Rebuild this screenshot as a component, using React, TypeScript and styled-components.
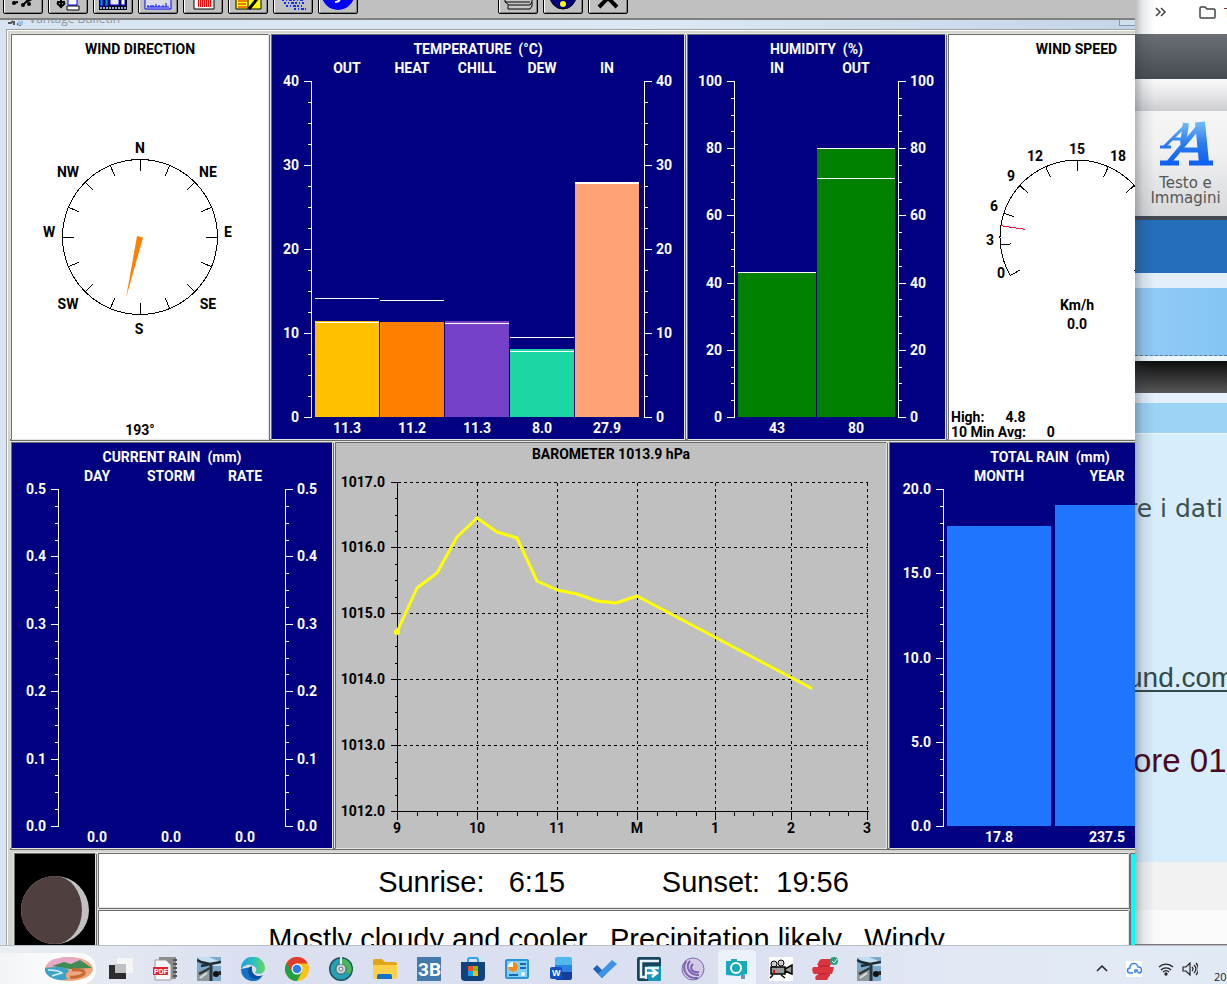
import React from "react";
import styled, { createGlobalStyle } from "styled-components";

const GlobalStyle = createGlobalStyle`
  * { box-sizing: border-box; }
  body { margin: 0; overflow: hidden; background: #d7e4f2; }
`;

const NAVY = "#000080";
const SILVER = "#c0c0c0";
const PANEL_FONT = `Roboto, "Liberation Sans", sans-serif`;

/* ---------- page ---------- */

const Desktop = styled.div`
  display: flex;
  flex-direction: column;
  height: 100vh;
  font-family: ${PANEL_FONT};
`;

const Workspace = styled.main`
  display: flex;
  flex: 1;
  min-height: 0;
  overflow: hidden;
`;

/* ---------- weather window ---------- */

const WeatherWindow = styled.section`
  flex: 1;
  min-width: 0;
  overflow: hidden;
  background: #d7e4f2;
`;

const Toolbar = styled.div`
  display: flex;
  align-items: flex-end;
  gap: 5px;
  height: 20px;
  padding: 0 3px 4px;
  background: ${SILVER};
  border-bottom: 2px solid #808080;
`;

const ToolButton = styled.button<{ $apart?: boolean }>`
  display: flex;
  flex: none;
  align-items: flex-end;
  justify-content: center;
  width: 40px;
  height: 32px;
  padding: 0 0 2px;
  margin-left: ${(p) => (p.$apart ? "135px" : "0")};
  background: ${SILVER};
  border: 1px solid #000;
  border-radius: 2px;
  box-shadow: inset 1px 0 #fff, inset -1px -1px #808080;
`;

const TitleBar = styled.header`
  display: flex;
  gap: 6px;
  height: 9px;
  padding-left: 8px;
  overflow: hidden;
  background: linear-gradient(90deg, #d7e4f2, #dbe7f3 60%, #c3d5e8);
`;

const WindowTitle = styled.h1`
  flex: 1;
  margin: -8px 0 0;
  font: 12px/14px "Open Sans", sans-serif;
  color: #9097a0;
`;

const MinimizeButton = styled.button`
  width: 16px;
  height: 6px;
  padding: 0;
  background: #cfdfee;
  border: 1px solid #8a98a8;
  border-width: 0 0 1px 1px;
`;

const Frame = styled.div`
  margin-left: 6px;
  padding: 3px 0 0 2px;
  background: #d4d4ce;
  border: solid #a0a0a0;
  border-width: 1px 0 0 1px;
  box-shadow: inset 1px 1px #fff;
`;

const PanelRow = styled.div<{ $height: number }>`
  display: flex;
  height: ${(p) => p.$height}px;
  margin-left: 1px;
`;

const Cell = styled.section<{ $basis: number; $bg: string; $fg: string; $fill?: boolean }>`
  flex: ${(p) => (p.$fill ? 1 : 0)} 0 ${(p) => p.$basis}px;
  overflow: hidden;
  margin: 1px;
  background: ${(p) => p.$bg};
  color: ${(p) => p.$fg};
  border: 1px solid;
  border-color: #6d6d6d #e4e4e0 #e4e4e0 #6d6d6d;
  box-shadow: -1px -1px #e4e4e0, 1px 1px #6d6d6d, 1px -1px #e4e4e0, -1px 1px #6d6d6d;
`;

const CellTitle = styled.h2<{ $top?: number }>`
  margin: 0;
  padding-top: ${(p) => p.$top ?? 4}px;
  font: 700 14px/20px ${PANEL_FONT};
  text-align: center;
  white-space: pre;
`;

const Drawing = styled.svg<{ $left?: boolean }>`
  display: block;
  margin: ${(p) => (p.$left ? "0" : "0 auto")};
  overflow: visible;
  fill: currentColor;
  font: 700 14px ${PANEL_FONT};
`;

const Readings = styled.dl`
  margin: 0;
  padding-left: 2px;
  font: 700 14px/15px ${PANEL_FONT};
`;

const Reading = styled.div`
  display: flex;
  gap: 21px;
  dd { margin: 0; }
`;

const BottomRow = styled.div`
  display: flex;
  margin: 2px 0 0 4px;
`;

const TextColumn = styled.div`
  display: flex;
  flex: 1;
  flex-direction: column;
  min-width: 0;
`;

const Banner = styled.p`
  height: 55px;
  margin: 1px;
  background: #fff;
  color: #000;
  border: 1px solid;
  border-color: #6d6d6d #e4e4e0 #e4e4e0 #6d6d6d;
  box-shadow: -1px -1px #e4e4e0, 1px 1px #6d6d6d;
  font: 29px/56px "Liberation Sans", Arial, sans-serif;
  text-align: center;
  white-space: pre;
  overflow: hidden;
`;

const CyanStrip = styled.div`
  width: 5px;
  margin-top: 1px;
  background: #00ffff;
  border: solid #6d6d6d;
  border-width: 1px 0 0 1px;
`;

/* ---------- charts ---------- */

type Bar = { label: string; value: string; x: number; width: number; top?: number; color?: string; marks?: number[] };
type BarChartProps = {
  width: number;
  left: number;
  right?: number;
  bottom: number;
  ticks: string[];
  minor: number;
  bars: Bar[];
};

const AXIS_TOP = 22;

function BarChart({ width, left, right, bottom, ticks, minor, bars }: BarChartProps) {
  const steps = (ticks.length - 1) * minor;
  const span = bottom - AXIS_TOP;
  const all = Array.from({ length: steps + 1 }, (_, i) => ({
    y: Math.round(AXIS_TOP + (span * i) / steps),
    major: i % minor === 0,
    text: ticks[i / minor],
  }));
  return (
    <Drawing width={width} height={bottom + 20} $left>
      {bars.map((b) => (
        <g key={b.label}>
          {b.top !== undefined && <rect x={b.x} y={b.top} width={b.width} height={bottom - b.top} fill={b.color} />}
          {b.marks?.map((m) => <rect key={m} x={b.x} y={m} width={b.width} height={1} />)}
          <text x={b.x + b.width / 2} y={14} textAnchor="middle">{b.label}</text>
          <text x={b.x + b.width / 2} y={bottom + 16} textAnchor="middle">{b.value}</text>
        </g>
      ))}
      <rect x={left} y={AXIS_TOP} width={1} height={span + 1} />
      {right && <rect x={right} y={AXIS_TOP} width={1} height={span + 1} />}
      {all.map((t) => {
        const len = t.major ? 7 : 3;
        return (
          <g key={t.y}>
            <rect x={left - len} y={t.y} width={len} height={1} />
            {right && <rect x={right + 1} y={t.y} width={len} height={1} />}
            {t.major && <text x={left - 12} y={t.y + 5} textAnchor="end">{t.text}</text>}
            {t.major && right && <text x={right + 12} y={t.y + 5}>{t.text}</text>}
          </g>
        );
      })}
    </Drawing>
  );
}

const polar = (cx: number, cy: number, r: number, deg: number) => {
  const a = (deg * Math.PI) / 180;
  return [cx + r * Math.sin(a), cy - r * Math.cos(a)];
};

function Spokes({ cx, cy, angles }: { cx: number; cy: number; angles: number[] }) {
  return (
    <>
      {angles.map((a) => {
        const [x1, y1] = polar(cx, cy, 77, a);
        const [x2, y2] = polar(cx, cy, 66, a);
        return <line key={a} x1={x1} y1={y1} x2={x2} y2={y2} />;
      })}
    </>
  );
}

const compassPoints: [string, number, number][] = [
  ["N", 128, 94], ["NE", 196, 118], ["E", 216, 178], ["SE", 196, 250],
  ["S", 127, 275], ["SW", 56, 250], ["W", 37, 178], ["NW", 56, 118],
];

function Compass() {
  return (
    <Drawing width={256} height={380}>
      <g stroke="#000" fill="none" shapeRendering="crispEdges">
        <circle cx={128} cy={178} r={77.5} />
        <Spokes cx={128} cy={178} angles={Array.from({ length: 16 }, (_, i) => i * 22.5)} />
      </g>
      <path d="M125 177l6 1.500L114 239z" fill="#ff8000" />
      {compassPoints.map(([t, x, y]) => (
        <text key={t} x={x} y={y} textAnchor="middle">{t}</text>
      ))}
      <text x={128} y={376} textAnchor="middle">193°</text>
    </Drawing>
  );
}

const speedLabels: [string, number, number][] = [
  ["0", 52, 219], ["3", 41, 186], ["6", 45, 152], ["9", 62, 122], ["12", 86, 102],
  ["15", 128, 95], ["18", 169, 102], ["21", 196, 122],
];

function SpeedDial() {
  const [x1, y1] = polar(128, 178, 77, -120);
  const [x2, y2] = polar(128, 178, 77, 120);
  const [rx1, ry1] = polar(128, 178, 77, -81.6);
  const [rx2, ry2] = polar(128, 178, 53, -81.6);
  return (
    <Drawing width={256} height={351} $left>
      <g stroke="#000" fill="none" shapeRendering="crispEdges">
        <path d={`M${x1} ${y1}A77 77 0 1 1 ${x2} ${y2}`} />
        <Spokes cx={128} cy={178} angles={[-120, -96, -72, -48, -24, 0, 24, 48, 72, 96, 120]} />
        <line x1={rx1} y1={ry1} x2={rx2} y2={ry2} stroke="#ff1040" />
      </g>
      {speedLabels.map(([t, x, y]) => (
        <text key={t} x={x} y={y} textAnchor="middle">{t}</text>
      ))}
      <text x={128} y={251} textAnchor="middle">Km/h</text>
      <text x={128} y={270} textAnchor="middle">0.0</text>
    </Drawing>
  );
}

const hourMarks: [string, number][] = [["9", 61], ["10", 141], ["11", 221], ["M", 301], ["1", 379], ["2", 455], ["3", 531]];
const pressureMarks: [string, number][] = [["1017.0", 18], ["1016.0", 83], ["1015.0", 149], ["1014.0", 215], ["1013.0", 281], ["1012.0", 347]];
const pressureLine = "61,168 81,124 101,109 121,73 141,54 161,68 181,74 201,117 221,126 241,130 261,137 280,139 301,132 475,224";

function Barometer() {
  return (
    <Drawing width={550} height={380}>
      <g stroke="#000" shapeRendering="crispEdges" transform="translate(.5 .5)" fill="none">
        {pressureMarks.slice(0, 5).map(([t, y]) => <line key={t} x1={61} x2={531} y1={y} y2={y} strokeDasharray="3 3" />)}
        {hourMarks.slice(1).map(([t, x]) => <line key={t} x1={x} x2={x} y1={18} y2={347} strokeDasharray="3 3" />)}
        <path d="M61 18V347H532" />
        {pressureMarks.map(([t, y], i) => (
          <g key={t}>
            <line x1={54} x2={61} y1={y} y2={y} />
            {i < 5 && [1, 2, 3].map((k) => {
              const my = Math.round(y + ((pressureMarks[i + 1][1] - y) * k) / 4);
              return <line key={k} x1={58} x2={61} y1={my} y2={my} />;
            })}
          </g>
        ))}
        {hourMarks.map(([t, x], i) => (
          <g key={t}>
            <line x1={x} x2={x} y1={347} y2={355} />
            {i < 6 && [1, 2, 3].map((k) => {
              const mx = Math.round(x + ((hourMarks[i + 1][1] - x) * k) / 4);
              return <line key={k} x1={mx} x2={mx} y1={347} y2={351} />;
            })}
          </g>
        ))}
      </g>
      <polyline points={pressureLine} fill="none" stroke="#ffff00" strokeWidth={3} strokeLinejoin="round" strokeLinecap="round" />
      <circle cx={61} cy={168} r={3} fill="#ffff00" />
      {pressureMarks.map(([t, y]) => <text key={t} x={49} y={y + 5} textAnchor="end">{t}</text>)}
      {hourMarks.map(([t, x]) => <text key={t} x={x} y={369} textAnchor="middle">{t}</text>)}
    </Drawing>
  );
}

function Moon() {
  return (
    <Drawing width={80} height={112}>
      <circle cx={40} cy={56} r={34} fill="#c0c0c0" />
      <path d="M40 22A34 34 0 0 0 40 90A27 34 0 0 0 40 22z" fill="#503f3f" />
    </Drawing>
  );
}

/* ---------- browser window at the side ---------- */

const BrowserWindow = styled.aside`
  position: relative;
  display: flex;
  flex-direction: column;
  flex: 0 0 92px;
  overflow: hidden;
  background: #fafafa;
  border-bottom: 1px solid #777;
  &::after {
    content: "";
    position: absolute;
    inset: 0 auto 0 0;
    width: 20px;
    background: linear-gradient(90deg, rgba(40, 50, 60, 0.32), rgba(40, 50, 60, 0.1) 40%, transparent);
    pointer-events: none;
  }
`;

const Bookmarks = styled.nav`
  display: flex;
  flex: none;
  align-items: center;
  height: 34px;
  padding: 0 0 8px 19px;
  background: #fff;
  font: 14px/20px "Open Sans", sans-serif;
  color: #8a1c2c;
  white-space: nowrap;
`;

const MoreButton = styled.button`
  width: 14px;
  height: 20px;
  padding: 0;
  border: 0;
  background: none;
`;

const Divider = styled.span`
  width: 2px;
  height: 16px;
  margin: 0 16px 0 15px;
  background: #c4dcf8;
`;

const FolderLink = styled.a`
  display: flex;
  align-items: center;
  gap: 8px;
  color: inherit;
  text-decoration: none;
`;

const Band = styled.div<{ $height: number; $bg: string }>`
  flex: none;
  height: ${(p) => p.$height}px;
  background: ${(p) => p.$bg};
`;

const DashedBand = styled(Band)`
  border-bottom: 1px dashed #5a7890;
`;

const EditorButton = styled.button`
  display: flex;
  flex: none;
  flex-direction: column;
  align-items: center;
  gap: 9px;
  height: 105px;
  padding: 9px 0 0;
  margin: 0 -9px 0 0;
  border: 0;
  background: linear-gradient(#f6f6f6, #f0f0f1 40%, #d6d8da);
  font: 15px/15px "DejaVu Sans", sans-serif;
  color: #555;
  white-space: pre;
`;

const Article = styled.div`
  flex: none;
  height: 428px;
  padding-top: 55px;
  background: #d7edfb;
  white-space: nowrap;
`;

const ArticleLine = styled.p<{ $size: number; $color: string; $gap: number; $indent: number; $font: string }>`
  margin: 0 0 ${(p) => p.$gap}px ${(p) => p.$indent}px;
  font: ${(p) => p.$size}px/40px ${(p) => p.$font};
  color: ${(p) => p.$color};
  a { color: inherit; text-underline-offset: 3px; text-decoration-thickness: 2px; }
`;

const SANS = `"Liberation Sans", Arial, sans-serif`;

/* ---------- taskbar ---------- */

const Taskbar = styled.footer`
  display: flex;
  flex: none;
  align-items: center;
  height: 39px;
  padding-top: 8px;
  overflow: hidden;
  border-top: 1px solid #b9bcc4;
  background: linear-gradient(90deg, #eaeef2, #dae0f0 20%, #dbe0f0 60%, #e2e9f5 80%, #e0eaf5);
`;

const SearchPill = styled.button`
  display: flex;
  flex: none;
  align-items: center;
  justify-content: flex-end;
  width: 96px;
  height: 32px;
  padding: 0 2px 0 0;
  border: 0;
  border-radius: 0 16px 16px 0;
  background: linear-gradient(90deg, #f2f5f7, #fff);
`;

const Apps = styled.div`
  display: flex;
  flex: 1;
  gap: 6px;
  padding-left: 6px;
`;

const AppButton = styled.button<{ $active?: boolean }>`
  display: flex;
  flex: none;
  align-items: center;
  justify-content: center;
  width: 38px;
  height: 38px;
  padding: 0;
  border: 0;
  border-radius: 4px;
  background: ${(p) => (p.$active ? "#edf1f9" : "none")};
`;

const Tray = styled.div`
  display: flex;
  flex: none;
  align-items: center;
  gap: 16px;
`;

const StatusGroup = styled.div`
  display: flex;
  gap: 8px;
`;

const TrayButton = styled.button`
  display: flex;
  width: 16px;
  height: 24px;
  padding: 0;
  align-items: center;
  justify-content: center;
  border: 0;
  background: none;
`;

const Clock = styled.time`
  width: 13px;
  padding-top: 16px;
  font: 11px/14px "Open Sans", sans-serif;
  color: #222;
`;

/* ---------- icons ---------- */

const toolIcons: [string, React.ReactNode][] = [
  ["Station", <g key="a"><path d="M5 4l5-1M15 6l5-5M18 3l6-3" stroke="#000" strokeWidth="2" fill="none" /><circle cx="6" cy="4" r="2" /><circle cx="15" cy="6" r="2" /><circle cx="21" cy="5" r="2" /></g>],
  ["Download", <g key="a"><path d="M8 0v7M4 4l4 4 4-4M4 3h8" stroke="#000" strokeWidth="2" fill="none" /><path d="M15 0h9v6h-9z" fill="#fff" stroke="#00f" /><path d="M14 7h12v4H14z" fill="#fff" stroke="#000" /></g>],
  ["Bulletin", <g key="a"><path d="M1 0h28v11H1z" fill="#000" /><path d="M2 0h3v7H2zM7 0h3v7H7z" fill="#00a0a0" stroke="#00f" /><path d="M12 0h9v6h-9z" fill="#ececec" stroke="#00f" /><path d="M23 0h4v6h-4z" fill="#fff" stroke="#00f" /><path d="M2 9h26" stroke="#9ad" strokeDasharray="2 1" strokeWidth="2" /></g>],
  ["Strip chart", <g key="a"><path d="M2 0h26v10H2z" fill="#dcdce4" stroke="#00f" /><path d="M5 8v-2M8 8V6M10 8V6M13 8V5M16 8V6M20 8V6M23 8V4" stroke="#00f" /><path d="M4 8h22" stroke="#00f" /></g>],
  ["Plot", <g key="a"><path d="M6 0h20v10H6z" fill="#fff" stroke="#000" /><path d="M10.500 0v8M12.500 0v8M14.500 0v8M16.500 0v8M18.500 0v8M20.500 0v8M22.500 0v8" stroke="#f00" /></g>],
  ["Database", <g key="a"><path d="M3 0h25v10H3z" fill="#ff0" stroke="#000" /><path d="M5 2h9M5 5h8M5 8h9" stroke="#d00" /><path d="M15 0v10" stroke="#000" /><path d="M24 0L16 10" stroke="#000" strokeWidth="3" /></g>],
  ["Noaa", <path key="a" d="M4 1h22M6 4h20M8 7h16M16 10h12" stroke="#1030e8" strokeWidth="2" strokeDasharray="2 2 1 2 3 1" fill="none" />],
  ["Moon", <g key="a"><ellipse cx="15" cy="-4" rx="16" ry="15" fill="#0000f8" /><path d="M12 3q4 0 5-3" stroke="#fff" strokeWidth="2" fill="none" /></g>],
  ["Print", <path key="a" d="M2 0v3l4 3h21l2-3V0M2 3h25M5 6v4h22l2-3V3" fill="#c8c8c8" stroke="#000" />],
  ["Help", <g key="a"><ellipse cx="15" cy="-3" rx="13" ry="13" fill="#000080" stroke="#000" /><circle cx="15" cy="5" r="3" fill="#ff0" /></g>],
  ["Close", <path key="a" d="M6 8l9-9 9 9" fill="none" stroke="#000" strokeWidth="4" />],
];

const Station = () => (
  <svg width="24" height="24" viewBox="0 0 24 24">
    <path d="M0 0h24v24H0z" fill="#7ba9cb" />
    <path d="M0 0h12l12 5v4H10z" fill="#c3deee" />
    <path d="M0 14l9-2 6 3v9H0z" fill="#8c9a9c" />
    <path d="M0 3l4 2 9 2 11-2M4 9l10-2" stroke="#1d2b33" strokeWidth="2.500" fill="none" />
    <path d="M14 6v18" stroke="#2b3439" strokeWidth="3" fill="none" />
    <path d="M2 17l11-6" stroke="#2b3439" strokeWidth="2" fill="none" />
    <circle cx="19" cy="17" r="3" fill="#111" />
    <circle cx="23" cy="16" r="2" fill="#222" />
    <path d="M3 21l7-5" stroke="#ddd" strokeWidth="2" />
  </svg>
);

const apps: [string, React.ReactNode][] = [
  ["Task view", <svg width="26" height="24" key="a"><path d="M9 1h16v15H9z" fill="#f5f5f6" /><path d="M1 8h17v14H1z" fill="#2c2c2e" /><path d="M7 7h11v9H7z" fill="#bfc0c2" /></svg>],
  ["PDF archiver", <svg width="24" height="24" key="a"><path d="M6 0h17v22H6z" fill="#8c8c8e" /><path d="M20 3h4M20 7h4M20 11h4M20 15h4M20 19h4" stroke="#555" strokeWidth="2" /><path d="M2 3h11l5 5v15H2z" fill="#f7f7f7" stroke="#9a9a9a" /><path d="M0 10h15v8H0z" fill="#e5252a" /><text x="1" y="17" fontSize="7" fontWeight="700" fontFamily="Liberation Sans, sans-serif" fill="#fff">PDF</text></svg>],
  ["WeatherLink", <Station key="a" />],
  ["Edge", <svg width="24" height="24" key="a"><defs><linearGradient id="eg" x1="0" x2="1"><stop offset="0" stopColor="#1a9ee0" /><stop offset=".6" stopColor="#35c3b5" /><stop offset="1" stopColor="#62d85a" /></linearGradient></defs><path d="M0 12A12 12 0 0 0 21 20Q17 22 13 20L10 10z" fill="#1272c8" /><path d="M0 12A12 12 0 0 1 24 11C24 16 19 18 14 16C15 14 16 13 15 11C13 8 9 7 6 8Q2 9 0 12z" fill="url(#eg)" /><path d="M11 9c-6 1-5 12 3 13 3 0 6-1 8-4-3 2-8 1-10-2-2-2-1-5-1-7z" fill="#0d4f9e" /></svg>],
  ["Chrome", <svg width="24" height="24" key="a"><circle cx="12" cy="12" r="12" fill="#fbc116" /><path d="M1.600 6A12 12 0 0 0 12 24l5-9-5-3z" fill="#269f42" /><path d="M12 6.500h10.700A12 12 0 0 0 1.600 6L7 15z" fill="#e33b2e" /><circle cx="12" cy="12" r="5.500" fill="#fff" /><circle cx="12" cy="12" r="4.300" fill="#2f7de9" /></svg>],
  ["Disk tool", <svg width="24" height="24" key="a"><circle cx="12" cy="12" r="12" fill="#1f4f5c" /><circle cx="12" cy="12" r="8" fill="none" stroke="#25a0b5" strokeWidth="5" /><path d="M13 4a8 8 0 0 1 6 12" fill="none" stroke="#45b956" strokeWidth="5" /><circle cx="12" cy="12" r="5" fill="#cfd6da" stroke="#61767c" /><circle cx="12" cy="12" r="2" fill="#f4f4f4" stroke="#61767c" /><path d="M12 0v7" stroke="#e8eef0" strokeWidth="2" /></svg>],
  ["Files", <svg width="26" height="24" key="a"><path d="M1 4q0-2 2-2h7l3 3h10q2 0 2 2v14H1z" fill="#e2a51a" /><path d="M1 8h24v12q0 2-2 2H3q-2 0-2-2z" fill="#fdd04c" /><path d="M5 22v-3q0-2 2-2h11q2 0 2 2v3z" fill="#1272c9" /></svg>],
  ["3B", <svg width="24" height="24" key="a"><path d="M0 0h24v24H0z" fill="#4479ab" /><text x="1" y="19" fontSize="19" fontWeight="700" fontFamily="Roboto, sans-serif" fill="#fff">3B</text></svg>],
  ["Store", <svg width="24" height="24" key="a"><path d="M7 6V3q0-2 2-2h6q2 0 2 2v3" fill="none" stroke="#27a8e8" strokeWidth="2" /><path d="M0 5h24v15q0 4-4 4H4q-4 0-4-4z" fill="#12427c" /><path d="M7 9h5v5H7z" fill="#f15024" /><path d="M12 9h5v5h-5z" fill="#80bb02" /><path d="M7 14h5v5H7z" fill="#04a5ee" /><path d="M12 14h5v5h-5z" fill="#feb902" /></svg>],
  ["Control panel", <svg width="24" height="20" key="a"><rect x="1" y="1" width="22" height="18" rx="1" fill="#7fd0f8" stroke="#2b93d6" strokeWidth="2" /><circle cx="8" cy="8" r="5" fill="#fff" /><path d="M8 8V3a5 5 0 1 1-5 5z" fill="#f08b1d" /><path d="M15 5h6M15 9h6M4 16h9" stroke="#1667ad" strokeWidth="2" /><circle cx="18" cy="15" r="2" fill="#fff" /></svg>],
  ["Word", <svg width="24" height="24" key="a"><path d="M6 2q0-2 2-2h13q2 0 2 2v6H6z" fill="#4fb8ee" /><path d="M6 8h17v7H6z" fill="#2a83e2" /><path d="M6 15h17v6q0 2-2 2H8q-2 0-2-2z" fill="#123f9e" /><rect x="1" y="10" width="12" height="12" rx="2" fill="#134fc0" /><text x="3" y="19" fontSize="9" fontWeight="700" fontFamily="Liberation Sans, sans-serif" fill="#fff">W</text></svg>],
  ["To do", <svg width="26" height="22" key="a"><path d="M1 11l4-4 9 9-4 4z" fill="#235db5" /><path d="M10 20L6 16 20 2l5 4z" fill="#3f92e8" /></svg>],
  ["File transfer", <svg width="24" height="24" key="a"><rect width="24" height="24" rx="2" fill="#17455e" /><path d="M11 9h13v13q0 2-2 2H11z" fill="#1697b9" /><path d="M22 4H4v16h4M9 22V11h13" stroke="#e9f4f8" strokeWidth="2.500" fill="none" /><path d="M9 16h10M15 12l5 4-5 4" stroke="#fff" strokeWidth="2.500" fill="none" /></svg>],
  ["Torrent", <svg width="24" height="24" key="a"><circle cx="12" cy="12" r="11" fill="#d3cbe6" stroke="#7a68b0" /><path d="M5 4c-5 9 1 18 12 17M9 4c-5 6-1 14 9 14M12 7c-4 4-1 9 6 8" fill="none" stroke="#7a62ae" strokeWidth="2" /></svg>],
  ["Camera", <svg width="24" height="22" key="a"><path d="M1 3h5V1h6v2h10v13l-9 2L1 17z" fill="#17a9bd" /><circle cx="11" cy="10" r="5" fill="#17a9bd" stroke="#fff" strokeWidth="2" /><path d="M16 17h4v4h-4z" fill="#7a8fa2" /></svg>],
  ["Video recorder", <svg width="24" height="24" key="a"><path d="M0 0h24v24H0z" fill="#fff" /><circle cx="5" cy="7" r="3" fill="#ccc" stroke="#000" /><circle cx="12" cy="6" r="3" fill="#ccc" stroke="#000" /><path d="M2 10h14v7H2zM16 12l7-4v9l-7-3" fill="#999" stroke="#000" strokeWidth="1.500" /><path d="M4 18l-3 3M12 18l4 3" stroke="#000" strokeWidth="1.500" /><path d="M4 13h2v3H4z" fill="#e11" /></svg>],
  ["Backup", <svg width="28" height="26" key="a"><path d="M8 5q1-2 3-2h11l-2 6H6zM2 11h21l-2 7H3q-3-3-1-7zM6 19h13l-3 5H5q-2-3 1-5zM7 8h12v12H7z" fill="#dc3340" /><path d="M8 10h10M7 18h9" stroke="#b01e2c" /><circle cx="23" cy="5" r="4" fill="#1fa279" /><path d="M21 5l2 2 3-4" stroke="#fff" fill="none" /></svg>],
  ["WeatherLink bulletin", <Station key="a" />],
];

/* ---------- application ---------- */

const tempBars: Bar[] = [
  { label: "OUT", value: "11.3", top: 262, color: "#ffc000", marks: [239, 263] },
  { label: "HEAT", value: "11.2", top: 263, color: "#ff8000", marks: [241] },
  { label: "CHILL", value: "11.3", top: 262, color: "#7540c8", marks: [264] },
  { label: "DEW", value: "8.0", top: 290, color: "#1cd6a4", marks: [278, 292] },
  { label: "IN", value: "27.9", top: 123, color: "#ffa475", marks: [123, 124] },
].map((b, i) => ({ ...b, x: 43 + i * 65, width: 64 }));

export default function App() {
  return (
    <Desktop>
      <GlobalStyle />
      <Workspace>
        <WeatherWindow>
          <Toolbar>
            {toolIcons.map(([name, art], i) => (
              <ToolButton key={name} aria-label={name} $apart={i === 8}>
                <svg width="30" height="12">{art}</svg>
              </ToolButton>
            ))}
          </Toolbar>
          <TitleBar>
            <svg width="15" height="6"><path d="M0 3h3l2-2M6 5V1M9 4l4 1" stroke="#555" strokeWidth="2" fill="none" /><path d="M10 1h5v4h-5z" fill="#9cc3e8" /></svg>
            <WindowTitle>Vantage Bulletin</WindowTitle>
            <MinimizeButton aria-label="Minimize" />
          </TitleBar>
          <Frame>
            <PanelRow $height={408}>
              <Cell $basis={258} $bg="#fff" $fg="#000">
                <CellTitle>WIND DIRECTION</CellTitle>
                <Compass />
              </Cell>
              <Cell $basis={414} $bg={NAVY} $fg="#fff">
                <CellTitle>{"TEMPERATURE  (°C)"}</CellTitle>
                <BarChart width={412} left={39} right={372} bottom={358} minor={4} ticks={["40", "30", "20", "10", "0"]} bars={tempBars} />
              </Cell>
              <Cell $basis={259} $bg={NAVY} $fg="#fff">
                <CellTitle>{"HUMIDITY  (%)"}</CellTitle>
                <BarChart
                  width={257} left={46} right={210} bottom={358} minor={4}
                  ticks={["100", "80", "60", "40", "20", "0"]}
                  bars={[
                    { label: "IN", value: "43", x: 50, width: 78, top: 213, color: "#008000", marks: [213] },
                    { label: "OUT", value: "80", x: 129, width: 78, top: 89, color: "#008000", marks: [89, 119] },
                  ]}
                />
              </Cell>
              <Cell $basis={257} $bg="#fff" $fg="#000" $fill>
                <CellTitle>WIND SPEED</CellTitle>
                <SpeedDial />
                <Readings>
                  <Reading><dt>High:</dt><dd>4.8</dd></Reading>
                  <Reading><dt>10 Min Avg:</dt><dd>0</dd></Reading>
                </Readings>
              </Cell>
            </PanelRow>
            <PanelRow $height={409}>
              <Cell $basis={322} $bg={NAVY} $fg="#fff">
                <CellTitle>{"CURRENT RAIN  (mm)"}</CellTitle>
                <BarChart
                  width={320} left={46} right={273} bottom={359} minor={4}
                  ticks={["0.5", "0.4", "0.3", "0.2", "0.1", "0.0"]}
                  bars={[
                    { label: "DAY", value: "0.0", x: 48, width: 74 },
                    { label: "STORM", value: "0.0", x: 122, width: 74 },
                    { label: "RATE", value: "0.0", x: 196, width: 74 },
                  ]}
                />
              </Cell>
              <Cell $basis={552} $bg={SILVER} $fg="#000">
                <CellTitle $top={1}>BAROMETER 1013.9 hPa</CellTitle>
                <Barometer />
              </Cell>
              <Cell $basis={322} $bg={NAVY} $fg="#fff" $fill>
                <CellTitle>{"TOTAL RAIN  (mm)"}</CellTitle>
                <BarChart
                  width={320} left={53} bottom={359} minor={5}
                  ticks={["20.0", "15.0", "10.0", "5.0", "0.0"]}
                  bars={[
                    { label: "MONTH", value: "17.8", x: 57, width: 104, top: 59, color: "#2075ff" },
                    { label: "YEAR", value: "237.5", x: 165, width: 104, top: 38, color: "#2075ff" },
                  ]}
                />
              </Cell>
            </PanelRow>
            <BottomRow>
              <Cell $basis={82} $bg="#000" $fg="#fff"><Moon /></Cell>
              <TextColumn>
                <Banner>{"Sunrise:   6:15            Sunset:  19:56"}</Banner>
                <Banner>{"Mostly cloudy and cooler.  Precipitation likely.  Windy. "}</Banner>
              </TextColumn>
              <CyanStrip />
            </BottomRow>
          </Frame>
        </WeatherWindow>

        <BrowserWindow>
          <Bookmarks>
            <MoreButton aria-label="More bookmarks">
              <svg width="14" height="12" fill="none" stroke="#444" strokeWidth="1.500"><path d="M2 2l4 4-4 4M7 2l4 4-4 4" /></svg>
            </MoreButton>
            <Divider />
            <FolderLink href="#">
              <svg width="17" height="14" fill="none" stroke="#444" strokeWidth="1.500"><path d="M1 2q0-1 1-1h4l2 2h7q1 0 1 1v7q0 1-1 1H2q-1 0-1-1z" /></svg>
              T
            </FolderLink>
          </Bookmarks>
          <Band $height={45} $bg="linear-gradient(#6c7076, #585c63 50%, #464a52)" />
          <Band $height={32} $bg="linear-gradient(#fbfbfc, #e6e6e9 50%, #cbccd0)" />
          <EditorButton>
            <svg width="54" height="47" viewBox="0 0 54 47">
              <defs>
                <linearGradient id="aa" gradientUnits="userSpaceOnUse" x1="0" y1="0" x2="0" y2="47"><stop offset="0" stopColor="#7cc0f6" /><stop offset=".5" stopColor="#2a7bec" /><stop offset="1" stopColor="#0a5cf2" /></linearGradient>
              </defs>
              <g fill="none" stroke="url(#aa)">
                <path d="M5 27L28 4" strokeWidth="3" />
                <path d="M27 3L24 24" strokeWidth="6" />
                <path d="M14 19h12" strokeWidth="3" />
                <path d="M1 27h11" strokeWidth="3" />
                <path d="M10 42L42 4" strokeWidth="5" />
                <path d="M41 2L45 43" strokeWidth="10" />
                <path d="M22 30h22" strokeWidth="5" />
                <path d="M1 43h19M30 43h24" strokeWidth="5" />
              </g>
            </svg>
            {"Testo e\nImmagini"}
          </EditorButton>
          <Band $height={4} $bg="#424750" />
          <Band $height={53} $bg="#256ebc" />
          <Band $height={15} $bg="#e3f0fb" />
          <DashedBand $height={68} $bg="linear-gradient(90deg, #94cbf6, #84c5f6)" />
          <Band $height={5} $bg="#ecf6fd" />
          <Band $height={32} $bg="linear-gradient(#0c0c0c, #585858)" />
          <Band $height={10} $bg="#e5f1fc" />
          <Band $height={30} $bg="#9dd4f6" />
          <Band $height={1} $bg="#f2fafe" />
          <Article>
            <ArticleLine $size={25} $color="#3c5050" $gap={129} $indent={-8} $font={`"DejaVu Sans", sans-serif`}>re i dati</ArticleLine>
            <ArticleLine $size={28} $color="#33494a" $gap={43} $indent={-8} $font={SANS}><a href="#">und.com</a></ArticleLine>
            <ArticleLine $size={33} $color="#4a0822" $gap={0} $indent={-2} $font={SANS}>ore 01</ArticleLine>
          </Article>
          <Band $height={48} $bg="#f2f2f2" />
        </BrowserWindow>
      </Workspace>

      <Taskbar>
        <SearchPill aria-label="Search">
          <svg width="50" height="26">
            <ellipse cx="25" cy="13" rx="24" ry="12" fill="#f2a57c" />
            <path d="M6 5Q24-3 42 6L30 11H2z" fill="#e6a9c8" />
            <path d="M8 10l12-4 7 2 9-4 12 8-22 1z" fill="#3f8a55" />
            <path d="M1 12q22-3 24 3-6 4-1 8-10 3-18-2Q0 17 1 12z" fill="#3ba3c8" />
            <path d="M28 14q14-1 12 4-6 4-14 3" fill="none" stroke="#c46a35" strokeWidth="3" />
            <path d="M4 14q10 0 14 3-8 2-10 3" fill="none" stroke="#d8f0f4" strokeWidth="1.500" />
          </svg>
        </SearchPill>
        <Apps>
          {apps.map(([name, art]) => (
            <AppButton key={name} aria-label={name} $active={name === "Camera"}>{art}</AppButton>
          ))}
        </Apps>
        <Tray>
          <TrayButton aria-label="Hidden icons">
            <svg width="12" height="8" fill="none" stroke="#222" strokeWidth="1.500"><path d="M1 6l5-5 5 5" /></svg>
          </TrayButton>
          <TrayButton aria-label="Cloud">
            <svg width="16" height="16"><path d="M0 0h16v16H0z" fill="#fff" /><path d="M7 12H4a2.500 2.500 0 0 1 0-5 4 4 0 0 1 8-1 3 3 0 0 1 1 6l-4-3M9 12V9h3" fill="none" stroke="#3c82ec" strokeWidth="1.500" /></svg>
          </TrayButton>
          <StatusGroup>
            <TrayButton aria-label="Network">
              <svg width="16" height="14" fill="none" stroke="#222" strokeWidth="1.300"><path d="M1 5a10 10 0 0 1 14 0M3 8a7 7 0 0 1 10 0M5 10a4 4 0 0 1 6 0" /><circle cx="8" cy="12" r="1" fill="#222" /></svg>
            </TrayButton>
            <TrayButton aria-label="Volume">
              <svg width="17" height="14" fill="none" stroke="#222" strokeWidth="1.200"><path d="M1 5h3l4-4v12L4 9H1zM10 5q2 2 0 4M12 3q4 4 0 8M14 1q5 6 0 12" /></svg>
            </TrayButton>
          </StatusGroup>
          <Clock>20</Clock>
        </Tray>
      </Taskbar>
    </Desktop>
  );
}
